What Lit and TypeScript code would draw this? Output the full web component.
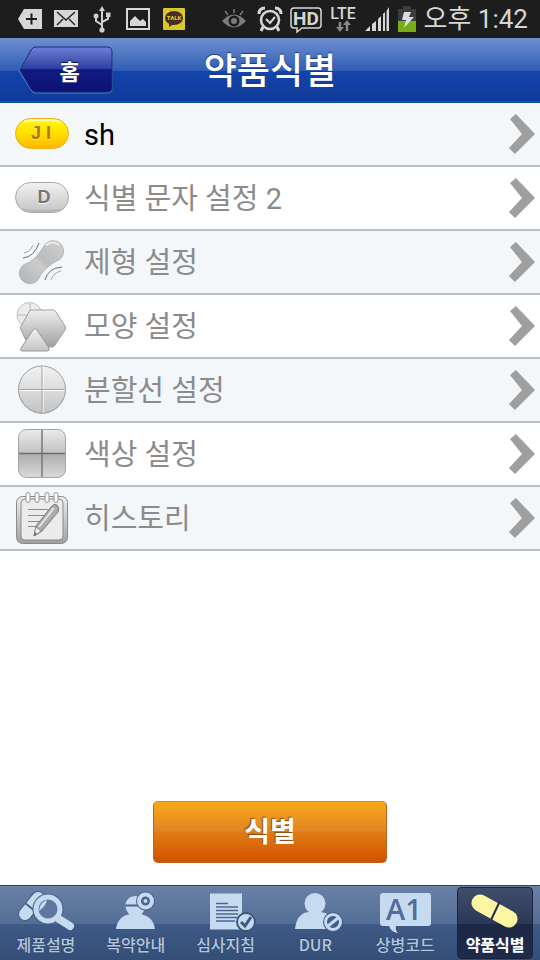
import { LitElement, html, css, svg } from "lit";
import { customElement, property } from "lit/decorators.js";
import { classMap } from "lit/directives/class-map.js";

const defs = svg`
  <defs>
    <linearGradient id="silver" x1="0" y1="0" x2="0" y2="1">
      <stop offset="0" stop-color="#f2f2f2" /><stop offset="1" stop-color="#c4c4c4" />
    </linearGradient>
    <linearGradient id="steel" x1="0" y1="0" x2="0" y2="1">
      <stop offset="0" stop-color="#efefef" /><stop offset="1" stop-color="#a0a0a0" />
    </linearGradient>
    <linearGradient id="gold" x1="0" y1="0" x2="0" y2="1">
      <stop offset="0" stop-color="#fff45c" /><stop offset="0.2" stop-color="#fff000" />
      <stop offset="0.6" stop-color="#ffd800" /><stop offset="1" stop-color="#ffb400" />
    </linearGradient>
    <linearGradient id="tile" x1="0" y1="0" x2="0" y2="1">
      <stop offset="0" stop-color="#ececec" /><stop offset="0.5" stop-color="#c0c0c0" />
      <stop offset="0.5" stop-color="#adadad" /><stop offset="1" stop-color="#dadada" />
    </linearGradient>
    <linearGradient id="bone" x1="1" y1="0" x2="0" y2="1">
      <stop offset="0" stop-color="#cfcfcf" /><stop offset="0.45" stop-color="#bcbcbc" />
      <stop offset="0.55" stop-color="#cccccc" /><stop offset="1" stop-color="#b2b2b2" />
    </linearGradient>
  </defs>`;

const rowIcons: Record<string, unknown> = {
  gold: svg`
    <rect x="0.5" y="11.5" width="53" height="30" rx="15" fill="url(#gold)" stroke="#efb21c" />
    <path d="M9 14.5 Q27 12 45 14.5" fill="none" stroke="#fffbb8" stroke-width="1.5" />
    <text x="26" y="33" text-anchor="middle" font-size="18" font-weight="700" fill="#fff07a">J I</text>
    <text x="26" y="32" text-anchor="middle" font-size="18" font-weight="700" fill="#b07408">J I</text>`,
  grey: svg`
    <rect x="0.5" y="11.5" width="53" height="30" rx="15" fill="url(#silver)" stroke="#aaaaaa" />
    <path d="M8 38.5 Q27 41.5 46 38.5" fill="none" stroke="#b4b4b4" stroke-width="1.5" />
    <text x="29" y="33" text-anchor="middle" font-size="18" font-weight="700" fill="#ffffff">D</text>
    <text x="29" y="32" text-anchor="middle" font-size="18" font-weight="700" fill="#767676">D</text>`,
  form: svg`
    <path d="M29 11 A10.500 10.500 0 1 1 43 25.500 C35 29 30 34 25 41 A10.500 10.500 0 1 1 9 29.500 C19 26 23 20 29 11 Z"
      fill="url(#bone)" stroke="#adadad" stroke-width="0.8" />
    <path d="M31 10.500 C34 7 40 6 44 10" fill="none" stroke="#ececec" stroke-width="2" />
    <path d="M8 23 Q19 22 24 8 M30 45 Q33 33 47 32" fill="none" stroke="#6c6c6c" stroke-width="1" />
    <path d="M9 18 Q15 17 18 10 M36 45 Q38 38 46 36" fill="none" stroke="#a4a4a4" stroke-width="1" />`,
  shape: svg`
    <circle cx="14.500" cy="16" r="12.500" fill="#ececec" stroke="#c0c0c0" />
    <path d="M15 4 V15 M3 16 H15" stroke="#b8b8b8" />
    <path d="M16 11 H38 Q40 11 41 13 L50 27 Q51 29 50 31 L40 46 Q39 48 37 48 H16 Q14 48 13 46 L6 31 Q5 29 6 27 L14 13 Q15 11 16 11 Z"
      fill="url(#steel)" stroke="#a0a0a0" />
    <path d="M18 31 Q20 28 22 31 L34 49 Q35 52 32 52 H8 Q4 52 6 49 Z" fill="url(#silver)" stroke="#999999" />`,
  split: svg`
    <circle cx="27" cy="26.5" r="23.5" fill="url(#silver)" stroke="#9c9c9c" />
    <path d="M6 36 A22.500 22.500 0 0 0 48 36" fill="none" stroke="#a8a8a8" stroke-width="1" />
    <path d="M28 3 V50 M4 27.5 H50" stroke="#ffffff" />
    <path d="M27 3 V50 M4 26.5 H50" stroke="#a4a4a4" />`,
  color: svg`
    <rect x="3.5" y="2.5" width="47" height="48" rx="8" fill="url(#tile)" stroke="#a4a4a4" />
    <path d="M27 3 V50 M4 26.5 H50" stroke="#6c6c6c" stroke-width="1.3" />`,
  history: svg`
    <rect x="1.5" y="5.5" width="51" height="47" rx="6" fill="url(#steel)" stroke="#8b8b8b" />
    <rect x="6" y="8" width="42" height="41" rx="4" fill="#ececec" stroke="#8a8a8a" />
    <path d="M13 18.5 H41 M13 24.5 H36 M13 30.5 H32 M13 35.5 H24" stroke="#8c8c8c" />
    ${[13, 22, 32, 41].map(
      (x) => svg`<rect x=${x - 2} y="1.5" width="4" height="10" rx="2" fill="#fafafa" stroke="#969696" />`
    )}
    <path d="M19 45 L21 35 L36 16 Q39 12 42 14 Q45 17 43 21 L27 40 Z" fill="#acacac" stroke="#7a7a7a" />
    <path d="M24 36 L39 17" stroke="#e4e4e4" stroke-width="2" />
    <path d="M19 45 L21 36 L26 40 Z" fill="#f4f4f4" stroke="#777777" stroke-width="0.7" />
    <path d="M19 45 L20 41 L22 43 Z" fill="#666666" />`,
};

const tabIcons: Record<string, unknown> = {
  product: svg`
    <path d="M17 26 L30 10" stroke="#465f8a" stroke-width="14" stroke-linecap="round" />
    <path d="M17 26 L30 10" stroke="currentColor" stroke-width="12" stroke-linecap="round" />
    <path d="M17 15 L27 23" stroke="#4a648f" stroke-width="2" />
    <circle cx="40" cy="21" r="15.500" fill="#465f8a" />
    <path d="M51 31 L62 38" stroke="currentColor" stroke-width="8" stroke-linecap="round" />
    <circle cx="40" cy="21" r="12" fill="#5e779f" stroke="currentColor" stroke-width="5" />
    <path d="M31 23 Q32 14 39 12 Q38 18 31 23 Z" fill="currentColor" />`,
  guide: svg`
    <path d="M18 41 Q20 27 34 26 H42 Q55 28 57 41 Z" fill="currentColor" />
    <path d="M27 17 Q29 8 38 8 Q47 9 47 19 Q45 29 37 29 Q29 28 27 17 Z" fill="currentColor" />
    <path d="M27 17.5 H41" stroke="#4a648f" stroke-width="2" />
    <circle cx="47.5" cy="13" r="9.500" fill="#4a648f" />
    <circle cx="47.5" cy="13" r="6.5" fill="#4a648f" stroke="currentColor" stroke-width="4" />
    <circle cx="47.5" cy="13" r="2" fill="currentColor" />`,
  review: svg`
    <rect x="22" y="5.5" width="32" height="36" fill="currentColor" />
    <path d="M28 15.5 H40 M28 19 H50 M28 22.5 H50 M28 26 H50 M28 29.5 H50 M28 33 H47" stroke="#4d6790" stroke-width="1.7" />
    <circle cx="58" cy="34" r="9" fill="currentColor" stroke="#3e5882" stroke-width="2" />
    <path d="M53 34 L57 38 L63 29" fill="none" stroke="#3e5882" stroke-width="3" />`,
  dur: svg`
    <circle cx="38" cy="15.5" r="10.5" fill="currentColor" />
    <path d="M18 41 Q20 24 33 24 H43 Q57 25 58 41 Z" fill="currentColor" />
    <circle cx="56" cy="34" r="10" fill="#435d88" />
    <circle cx="56" cy="34" r="7.5" fill="#435d88" stroke="currentColor" stroke-width="3" />
    <path d="M51 38 L61 30" stroke="currentColor" stroke-width="3" />`,
  code: svg`
    <path d="M16 5 H61 Q64 5 64 8 V35 Q64 38 61 38 H29 Q28 42 31 45 Q24 44 22 38 H16 Q13 38 13 35 V8 Q13 5 16 5 Z" fill="currentColor" />
    <text x="37" y="32" text-anchor="middle" font-size="29" font-weight="600" fill="#526d99">A1</text>`,
  pill: svg`
    <path d="M23 15 L52 31" stroke="#fbf5a4" stroke-width="17" stroke-linecap="round" />
    <path d="M42.5 14 L34 32" stroke="#222d4b" stroke-width="2" />`,
};

const statusIcons = {
  back: svg`<path d="M0 12 L6 2 H24 V22 H6 Z" fill="#d6d6d6" /><path d="M8 12 H19 M13.5 6.5 V17.5" stroke="#1d1d1d" stroke-width="2" />`,
  mail: svg`<rect y="3" width="24" height="17" fill="#d6d6d6" /><path d="M3 5 L12 13 L21 5 M3 18 L9 12 M21 18 L15 12" fill="none" stroke="#1d1d1d" stroke-width="1.4" />`,
  usb: svg`
    <path d="M12 2 V23 M12 18 L6 14 V9 M12 15 L18 12 V8" fill="none" stroke="#cfcfcf" stroke-width="2" />
    <path d="M12 -1 L15 4 H9 Z M16 5.5 h4.5 v4.5 h-4.5 Z" fill="#cfcfcf" />
    <circle cx="6" cy="9" r="2.5" fill="#cfcfcf" /><circle cx="12" cy="23" r="2.6" fill="#cfcfcf" />`,
  photo: svg`<rect x="1" y="2" width="22" height="20" fill="none" stroke="#d6d6d6" stroke-width="2" /><path d="M4 19 V14 L9 9 L14 14 L17 12 L20 15 V19 Z" fill="#d6d6d6" />`,
  talk: svg`
    <rect x="1" y="1" width="22" height="22" rx="1" fill="#d6c92e" />
    <ellipse cx="12" cy="11" rx="9" ry="7" fill="#4b2c26" /><path d="M7 15 L7 20 L12 17 Z" fill="#4b2c26" />
    <text x="12" y="13" text-anchor="middle" font-size="6" font-weight="700" fill="#e0d238">TALK</text>`,
  eye: svg`
    <path d="M0 14 Q12 1 24 14 Q12 27 0 14 Z" fill="#7c7c7c" /><circle cx="12" cy="14" r="5.5" fill="#1d1d1d" />
    <circle cx="12" cy="14" r="3" fill="#7c7c7c" /><path d="M12 2 V6 M3 4 L6 8 M21 4 L18 8" stroke="#7c7c7c" stroke-width="1.5" />`,
  alarm: svg`
    <circle cx="12" cy="13" r="9" fill="none" stroke="#d6d6d6" stroke-width="2.6" />
    <path d="M8 12 L12 16 L17 10" fill="none" stroke="#d6d6d6" stroke-width="2" />
    <path d="M1 7 Q1 1 7 1 M17 1 Q23 1 23 7 M5 20 L3 24 M19 20 L21 24" fill="none" stroke="#d6d6d6" stroke-width="3" />`,
};

@customElement("status-bar")
class StatusBar extends LitElement {
  static styles = css`
    :host {
      display: flex;
      align-items: center;
      justify-content: space-between;
      height: 38px;
      padding: 0 12px 0 18px;
      background: #1d1d1d;
      color: #d6d6d6;
      font-family: Roboto, "Noto Sans CJK KR", sans-serif;
    }
    .group { display: flex; align-items: center; gap: 12px; }
    .right { gap: 8px; }
    svg { display: block; flex: none; overflow: visible; }
    .time { font-size: 26px; line-height: 38px; white-space: nowrap; }
  `;
  private icon(body: unknown) {
    return html`<svg width="24" height="24" viewBox="0 0 24 24" aria-hidden="true">${body}</svg>`;
  }
  render() {
    const s = statusIcons;
    return html`
      <div class="group">${[s.back, s.mail, s.usb, s.photo, s.talk].map((i) => this.icon(i))}</div>
      <div class="group right">
        <div class="group">${[s.eye, s.alarm].map((i) => this.icon(i))}</div>
        <svg width="32" height="28" viewBox="0 0 32 28" aria-hidden="true">
          <path d="M4 3 H28 Q31 3 31 6 V20 Q31 23 28 23 H12 L7 27 V23 H4 Q1 23 1 20 V6 Q1 3 4 3 Z" fill="none" stroke="#d6d6d6" stroke-width="1.5" />
          <text x="16" y="20" text-anchor="middle" font-size="19" font-weight="700" fill="#d6d6d6">HD</text>
        </svg>
        <svg width="26" height="28" viewBox="0 0 26 28" aria-hidden="true">
          <text x="13" y="14" text-anchor="middle" font-size="16" font-weight="500" fill="#d6d6d6">LTE</text>
          <path d="M10 17 V24 M17 26 V19" stroke="#8a8a8a" stroke-width="2.5" />
          <path d="M6 22 H14 L10 27 Z M13 20 H21 L17 15 Z" fill="#8a8a8a" />
        </svg>
        <svg width="26" height="26" viewBox="0 0 26 26" aria-hidden="true">
          <path d="M1 25 L6 20 V25 Z M8 18 L12 15 V25 H8 Z M14 13 L17 10 V25 H14 Z M19 8 L21 6 V25 H19 Z M22.5 5 L25 1 V25 H22.5 Z" fill="#d6d6d6" />
        </svg>
        <svg width="18" height="26" viewBox="0 0 18 26" aria-hidden="true">
          <path d="M0 3 H5 V0 H13 V3 H18 V26 H0 Z" fill="#3c3c3c" /><path d="M0 15 H18 V26 H0 Z" fill="#78ad18" />
          <path d="M6 6 H13 L11 11 H16 L6 22 L8 14 H4 Z" fill="#dcdcdc" />
        </svg>
        <span class="time">오후 1:42</span>
      </div>`;
  }
}

@customElement("setting-row")
class SettingRow extends LitElement {
  @property() icon = "";
  @property() label = "";
  @property({ type: Boolean }) filled = false;
  static styles = css`
    :host { display: block; }
    .row {
      display: flex;
      align-items: center;
      gap: 15px;
      box-sizing: border-box;
      width: 100%;
      height: 64px;
      padding: 0 5px 0 15px;
      border: 0;
      border-bottom: 2px solid #bcbdbf;
      background: transparent;
      color: #8b8b8b;
      font: 29px/40px Roboto, "Noto Sans CJK KR", sans-serif;
      text-align: left;
    }
    .filled { color: #000; }
    .label { flex: 1; padding-top: 2px; }
    svg { display: block; flex: none; font-family: "Liberation Sans", sans-serif; }
  `;
  render() {
    return html`
      <button class=${classMap({ row: true, filled: this.filled })} type="button">
        <svg width="54" height="54" viewBox="0 0 54 54" aria-hidden="true">${defs}${rowIcons[this.icon]}</svg>
        <span class="label">${this.label}</span>
        <svg width="26" height="42" viewBox="0 0 26 42" aria-hidden="true">
          <path d="M1 6 L7 1 L26 21 L6 41 L0 35 L13 21 Z" fill="#9f9f9f" />
        </svg>
      </button>`;
  }
}

@customElement("tab-bar")
class TabBar extends LitElement {
  static styles = css`
    :host { display: block; }
    .bar {
      display: grid;
      grid-template-columns: repeat(6, 1fr);
      height: 74px;
      padding-left: 1px;
      border-top: 1px solid #3d4248;
      background: linear-gradient(#6a81a6, #536d95 52%, #3f5a86 52%, #344e76);
      font-family: "Noto Sans CJK KR", sans-serif;
    }
    .tab {
      display: flex;
      flex-direction: column;
      align-items: center;
      box-sizing: border-box;
      width: 76px;
      height: 72px;
      margin: 1px auto;
      border: 1px solid transparent;
      border-radius: 4px;
      color: #c6daf0;
      font-size: 16px;
      font-weight: 500;
      line-height: 20px;
      text-decoration: none;
      white-space: nowrap;
    }
    .label { color: #b4c6de; text-shadow: 0 -1px 1px #2b4166; }
    .active {
      border-color: #1a2440;
      background: linear-gradient(#414e6b, #2b3756 52%, #1d2744 52%, #202b4a);
    }
    .active .label { color: #fff; font-weight: 700; }
    svg { display: block; flex: none; font-family: "Open Sans", sans-serif; }
  `;
  private tabs = [
    ["product", "제품설명"],
    ["guide", "복약안내"],
    ["review", "심사지침"],
    ["dur", "DUR"],
    ["code", "상병코드"],
    ["pill", "약품식별"],
  ];
  render() {
    return html`<nav class="bar">
      ${this.tabs.map(
        ([id, label]) => html`
          <a class=${classMap({ tab: true, active: id === "pill" })} href="#${id}">
            <svg width="76" height="46" viewBox="0 0 76 46" fill="none" aria-hidden="true">${tabIcons[id]}</svg>
            <span class="label">${label}</span>
          </a>`
      )}
    </nav>`;
  }
}

@customElement("app-root")
class AppRoot extends LitElement {
  static styles = css`
    :host {
      display: flex;
      flex-direction: column;
      min-height: 100vh;
      background: #fff;
      font-family: Roboto, "Noto Sans CJK KR", sans-serif;
    }
    .header {
      display: grid;
      grid-template-columns: 1fr auto 1fr;
      align-items: center;
      box-sizing: border-box;
      height: 65px;
      padding: 0 18px;
      border-bottom: 2px solid #07589b;
      background: linear-gradient(#6e90cf, #305db4 52%, #1344ad 52%, #103a98);
    }
    .home {
      display: grid;
      place-items: center;
      width: 95px;
      height: 48px;
      padding: 0;
      border: 0;
      background: none;
      color: #fff;
      font: 700 22px/32px "Noto Sans CJK KR", sans-serif;
    }
    .home-shape, .home-text { grid-area: 1 / 1; }
    .home-text { padding-left: 8px; text-shadow: 0 -1px 1px #0b1150; }
    .title {
      margin: 0;
      padding-bottom: 4px;
      color: #fff;
      font: 500 36px/48px "Noto Sans CJK KR", sans-serif;
      text-shadow: 0 -1px 1px #183a82;
    }
    .list { margin: 0; padding: 0; list-style: none; }
    .item:nth-child(odd) { background: #f3f7fa; }
    .action { display: flex; flex: 1; align-items: flex-end; justify-content: center; padding: 22px; }
    .identify {
      width: 234px;
      height: 62px;
      padding: 0 0 4px;
      border: 1px solid #c2611a;
      border-top-color: #d08a3c;
      border-radius: 5px;
      background: linear-gradient(#f9a818, #e18525 48%, #df7d14 50%, #d25200);
      color: #fff;
      font: 700 28px/40px "Noto Sans CJK KR", sans-serif;
      text-shadow: -1px -1px 1px #8a4a10;
    }
  `;
  private rows = [
    { icon: "gold", label: "sh", filled: true },
    { icon: "grey", label: "식별 문자 설정 2", filled: false },
    { icon: "form", label: "제형 설정", filled: false },
    { icon: "shape", label: "모양 설정", filled: false },
    { icon: "split", label: "분할선 설정", filled: false },
    { icon: "color", label: "색상 설정", filled: false },
    { icon: "history", label: "히스토리", filled: false },
  ];
  render() {
    return html`
      <status-bar></status-bar>
      <header class="header">
        <button class="home" type="button">
          <svg class="home-shape" width="95" height="48" viewBox="0 0 95 48" aria-hidden="true">
            <defs>
              <linearGradient id="navy" x1="0" y1="0" x2="0" y2="1">
                <stop offset="0" stop-color="#6c7fd8" /><stop offset="0.5" stop-color="#2c3c9e" />
                <stop offset="0.5" stop-color="#131a86" /><stop offset="1" stop-color="#0c1270" />
              </linearGradient>
            </defs>
            <path d="M17 2 H89 Q94 2 94 7 V42 Q94 47 89 47 H17 Q15 47 13 44 L1 25 L13 5 Q15 2 17 2 Z" fill="none" stroke="#5b84d0" />
            <path d="M17 1 H89 Q94 1 94 6 V41 Q94 46 89 46 H17 Q15 46 13 43 L2 24 L13 4 Q15 1 17 1 Z" fill="url(#navy)" stroke="#1a2c74" />
          </svg>
          <span class="home-text">홈</span>
        </button>
        <h1 class="title">약품식별</h1>
      </header>
      <ul class="list">
        ${this.rows.map(
          (r) => html`<li class="item"><setting-row .icon=${r.icon} .label=${r.label} .filled=${r.filled}></setting-row></li>`
        )}
      </ul>
      <div class="action"><button class="identify" type="button">식별</button></div>
      <tab-bar></tab-bar>`;
  }
}
